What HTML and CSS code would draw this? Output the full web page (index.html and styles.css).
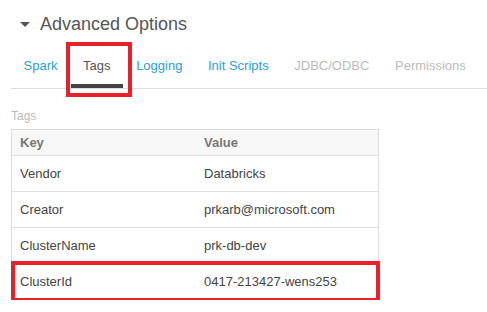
FILE: index.html
```html
<!DOCTYPE html>
<html lang="en">
  <head>
    <meta charset="UTF-8" />
    <meta name="viewport" content="width=device-width, initial-scale=1.0" />
    <title>Advanced Options</title>
    <link rel="stylesheet" href="styles.css">
  </head>
  <body>
    <div class="panel">
      <!--==================== TITLE ====================-->
      <h2 class="section-title">
        <span class="caret"></span>Advanced Options
      </h2>

      <!--==================== TABS ====================-->
      <ul class="tabs">
        <li class="tab">Spark</li>
        <li class="tab tab--active">Tags<span class="mark mark--tab"></span></li>
        <li class="tab">Logging</li>
        <li class="tab">Init Scripts</li>
        <li class="tab tab--disabled">JDBC/ODBC</li>
        <li class="tab tab--disabled">Permissions</li>
      </ul>

      <!--==================== TAGS TABLE ====================-->
      <div class="field-label">Tags</div>
      <div class="tag-table">
        <div class="tag-row tag-row--head">
          <div class="cell">Key</div>
          <div class="cell">Value</div>
        </div>
        <div class="tag-row">
          <div class="cell">Vendor</div>
          <div class="cell">Databricks</div>
        </div>
        <div class="tag-row">
          <div class="cell">Creator</div>
          <div class="cell">prkarb@microsoft.com</div>
        </div>
        <div class="tag-row">
          <div class="cell">ClusterName</div>
          <div class="cell">prk-db-dev</div>
        </div>
        <div class="tag-row">
          <div class="cell">ClusterId</div>
          <div class="cell">0417-213427-wens253</div>
        </div>
        <span class="mark mark--row"></span>
      </div>
    </div>
  </body>
</html>
```

FILE: styles.css
```css
body {
  margin: 0;
  background-color: #fff;
  font-family: "Liberation Sans", Arial, sans-serif;
  color: #444;
}
.panel {
  padding-left: 11px;
}
.section-title {
  margin: 0;
  padding: 14px 0 0 9px;
  display: flex;
  align-items: center;
  gap: 10px;
  font-size: 18px;
  line-height: 20px;
  font-weight: normal;
  color: #555;
}
.caret {
  width: 0;
  height: 0;
  border-left: 5px solid transparent;
  border-right: 5px solid transparent;
  border-top: 5px solid #555;
  margin-top: 1px;
}
.tabs {
  list-style: none;
  margin: 24px 0 0;
  padding: 0;
  display: flex;
  gap: 0.6px;
  border-bottom: 1px solid #ddd;
}
.tab {
  position: relative;
  padding: 0 12.5px 10px;
  font-size: 13px;
  line-height: 16px;
  color: #2b9fd3;
  border-bottom: 4px solid transparent;
  white-space: nowrap;
}
.tab--active {
  color: #555;
  border-bottom-color: #444;
}
.tab--disabled {
  color: #bbb;
}
.field-label {
  margin-top: 20px;
  font-size: 12px;
  line-height: 14px;
  color: #bbb;
}
.tag-table {
  position: relative;
  margin-top: 6px;
  width: 368px;
  box-sizing: border-box;
  border: 1px solid #ddd;
  border-bottom: none;
}
.tag-row {
  display: grid;
  grid-template-columns: 184px 1fr;
  height: 35px;
  align-items: center;
  border-bottom: 1px solid #ddd;
  font-size: 13px;
  color: #444;
}
.tag-row--head {
  height: 25px;
  background-color: #f8f8f8;
  font-weight: bold;
  color: #777;
}
.cell {
  padding: 0 8px;
}
/* red annotation boxes */
.mark {
  position: absolute;
  box-sizing: border-box;
  border: 4px solid #e8202a;
}
.mark--tab {
  left: -4.5px;
  top: -16px;
  width: 66px;
  height: 55px;
}
.mark--row {
  left: -1px;
  top: 131px;
  width: 369px;
  height: 41px;
}
```
